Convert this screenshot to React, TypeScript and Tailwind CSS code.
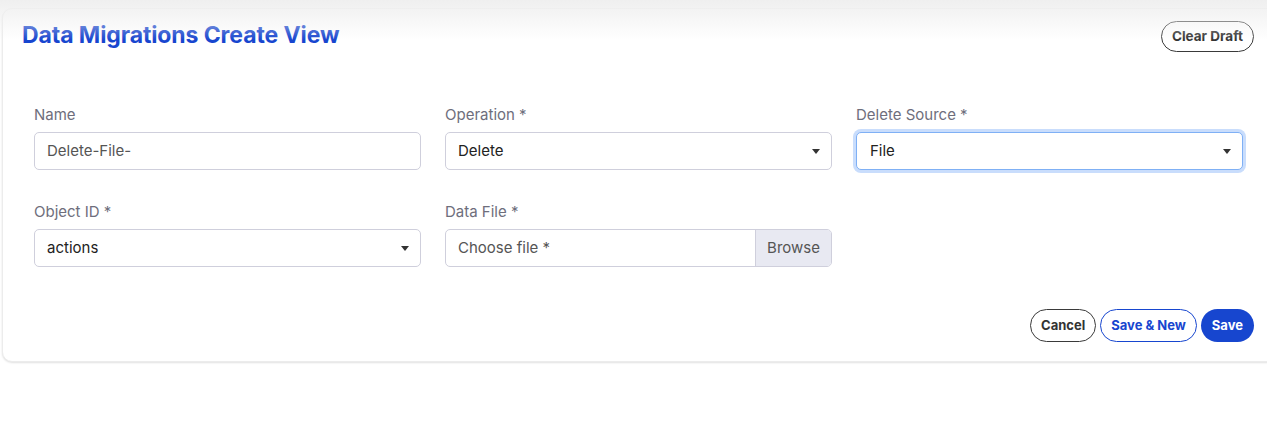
import React from 'react'

const FONT = { fontFamily: 'Inter, "Noto Sans", "Liberation Sans", sans-serif' }

function Caret() {
  return (
    <svg width="8" height="5" viewBox="0 0 8 5" className="shrink-0">
      <path d="M0 0h8L4 5z" fill="#333" />
    </svg>
  )
}

function Label({ children }: { children: React.ReactNode }) {
  return <div className="text-[15px] leading-5 text-[#6e6e7c] mb-[7px]">{children}</div>
}

function SelectBox({ value, focused }: { value: string; focused?: boolean }) {
  return (
    <div
      className={
        focused
          ? 'h-[38px] rounded-[5px] border border-[#7fb0f5] ring-[3px] ring-[#c9ddfc] bg-white flex items-center justify-between pl-[13px] pr-[11px]'
          : 'h-[38px] rounded-[5px] border border-[#cfcfdc] bg-white flex items-center justify-between pl-[12px] pr-[11px]'
      }
    >
      <span className="text-[15px] text-[#222]">{value}</span>
      <Caret />
    </div>
  )
}

export default function App() {
  return (
    <div className="relative w-[1267px] h-[429px] bg-white overflow-hidden" style={FONT}>
      <div className="pointer-events-none absolute inset-x-0 top-0 h-[40px] bg-gradient-to-b from-[#efefef] to-transparent z-10" />
      <div className="ml-[2px] mt-[8px] w-[1275px] rounded-[10px] bg-white shadow-[0_1px_2px_rgba(0,0,0,0.12)] border border-[#ececec] pl-[19px] pr-[22px] pt-[12px] pb-[19px]">
        <div className="flex items-start justify-between">
          <h1 className="text-[23px] leading-[28px] font-bold text-[#1746cf] tracking-[-0.1px]">
            Data Migrations Create View
          </h1>
          <button className="h-[31px] px-[10px] rounded-full border border-[#3a3a3a] text-[13.5px] font-bold text-[#333] bg-white">
            Clear Draft
          </button>
        </div>

        <div className="grid grid-cols-3 gap-x-[24px] gap-y-[32px] pl-[12px] pr-[11px] mt-[53px]">
          <div>
            <Label>Name</Label>
            <div className="h-[38px] rounded-[5px] border border-[#cfcfdc] bg-white flex items-center pl-[12px]">
              <span className="text-[15px] text-[#555]">Delete-File-</span>
            </div>
          </div>
          <div>
            <Label>Operation *</Label>
            <SelectBox value="Delete" />
          </div>
          <div>
            <Label>Delete Source *</Label>
            <SelectBox value="File" focused />
          </div>
          <div>
            <Label>Object ID *</Label>
            <SelectBox value="actions" />
          </div>
          <div>
            <Label>Data File *</Label>
            <div className="h-[38px] rounded-[5px] border border-[#cfcfdc] bg-white flex overflow-hidden">
              <div className="flex-1 flex items-center pl-[12px] text-[15px] text-[#555]">Choose file *</div>
              <div className="w-[76px] flex items-center justify-center bg-[#e8e9f2] border-l border-[#cfcfdc] text-[15px] text-[#555]">
                Browse
              </div>
            </div>
          </div>
          <div />
        </div>

        <div className="flex justify-end gap-[4px] mt-[42px]">
          <button className="h-[33px] px-[10px] rounded-full border border-[#3a3a3a] text-[13px] font-bold text-[#333] bg-white">
            Cancel
          </button>
          <button className="h-[33px] px-[10px] rounded-full border border-[#1746cf] text-[13px] font-bold text-[#1746cf] bg-white">
            Save &amp; New
          </button>
          <button className="h-[33px] px-[11px] rounded-full bg-[#1746cf] text-[13px] font-bold text-white">
            Save
          </button>
        </div>
      </div>
    </div>
  )
}
